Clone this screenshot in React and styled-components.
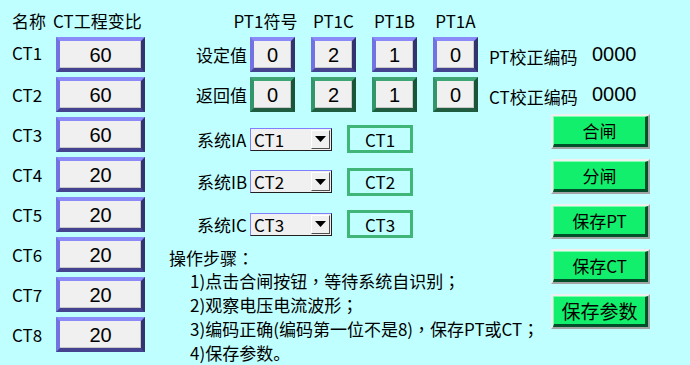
import React from "react";
import styled, { createGlobalStyle } from "styled-components";

const Global = createGlobalStyle`
  html, body { margin: 0; padding: 0; background: #c0ffff; }
  body {
    font-family: "Noto Sans CJK SC", "Microsoft YaHei", sans-serif;
    font-size: 17px;
    color: #000;
  }
  * { box-sizing: border-box; }
`;

const Page = styled.div`
  width: 690px;
  height: 365px;
  display: flex;
  overflow: hidden;
  background: #c0ffff;
`;

const LeftCol = styled.div`
  width: 145px;
  padding-left: 12px;
  display: flex;
  flex-direction: column;
  gap: 5px;
`;

const HeaderText = styled.div`
  height: 32px;
  padding-top: 8px;
  display: flex;
  align-items: center;
  line-height: 1;
  white-space: nowrap;
`;

const Gap = styled.span`
  display: inline-block;
  width: ${(p) => p.$w}px;
`;

const CtRow = styled.div`
  height: 35px;
  display: flex;
  align-items: center;
`;

const CtLabel = styled.div`
  width: 44px;
  line-height: 1;
  margin-top: ${(p) => p.$dy || 0}px;
`;

const ValueBox = styled.div`
  width: ${(p) => p.$w}px;
  height: 35px;
  border-style: solid;
  border-width: 4px;
  border-color: ${(p) =>
    p.$green
      ? "#3fa577 #1a5538 #1f5c40 #33956a"
      : "#8a8af8 #33336f #43438f #7272e2"};
  background: #f0f0f0;
  box-shadow: inset -1px -1px 0 #c8c8c8;
  display: flex;
  align-items: center;
  justify-content: center;
  font-family: "Liberation Sans", Arial, sans-serif;
  font-size: 20px;
  line-height: 1;
`;

const Middle = styled.div`
  margin-left: 24px;
  display: flex;
  flex-direction: column;
`;

const PtGrid = styled.div`
  padding-left: 27px;
  display: grid;
  grid-template-columns: 54px 61px 61px 61px 56px 103px auto;
  grid-template-rows: 32px 35px 35px;
  row-gap: 5px;
  align-items: center;
`;

const PtHead = styled.div`
  width: 45px;
  height: 32px;
  padding-top: 9px;
  padding-right: ${(p) => p.$pad || 0}px;
  display: flex;
  align-items: center;
  justify-content: center;
  white-space: nowrap;
  line-height: 1;
`;

const RowLabel = styled.div`
  line-height: 1;
  white-space: nowrap;
`;

const CodeLabel = styled.div`
  line-height: 1;
  white-space: nowrap;
  margin-top: 3px;
`;

const CodeValue = styled.div`
  font-family: "Liberation Sans", Arial, sans-serif;
  font-size: 20px;
  line-height: 1;
  margin-top: -1px;
`;

const Lower = styled.div`
  display: flex;
`;

const LowerLeft = styled.div`
  width: 382px;
  padding-top: 13px;
  display: flex;
  flex-direction: column;
`;

const DropList = styled.div`
  display: flex;
  flex-direction: column;
  gap: 14.5px;
`;

const DropRow = styled.div`
  height: 28px;
  padding-left: 28px;
  display: flex;
  align-items: center;
`;

const DropLabel = styled.div`
  width: 53px;
  line-height: 1;
  white-space: nowrap;
`;

const Select = styled.div`
  width: 82px;
  height: 23px;
  border-style: solid;
  border-width: 1px;
  border-color: #8080ff #202020 #202020 #8080ff;
  background: #f0f0f0;
  display: flex;
  align-items: center;
  padding: 0 1px 0 3px;
`;

const SelectText = styled.div`
  flex: 1;
  line-height: 1;
`;

const ArrowBtn = styled.div`
  width: 19px;
  height: 19px;
  border-style: solid;
  border-width: 1px;
  border-color: #ffffff #505050 #505050 #ffffff;
  background: #f0f0f0;
  display: flex;
  align-items: center;
  justify-content: center;
`;

const CtOut = styled.div`
  margin-left: 15px;
  width: 66px;
  height: 28px;
  border: 3px solid #3fb577;
  display: flex;
  align-items: center;
  justify-content: center;
  line-height: 1;
`;

const Steps = styled.div`
  margin-top: 9px;
  line-height: 24px;
  white-space: nowrap;
`;

const StepsTitle = styled.div`
  line-height: 22px;
`;

const StepLine = styled.div`
  padding-left: 21px;
`;

const Punct = styled.span`
  font-family: "Noto Sans CJK TC", "Noto Sans CJK SC", sans-serif;
`;

const Buttons = styled.div`
  padding-top: 2px;
  display: flex;
  flex-direction: column;
  gap: 10px;
`;

const Btn = styled.div`
  width: 99px;
  height: 35px;
  border-style: solid;
  border-width: 2px;
  border-color: #f0f0f0 #a4a4a4 #a4a4a4 #f0f0f0;
  display: flex;
`;

const BtnFace = styled.div`
  flex: 1;
  background: #12ef6c;
  border-style: solid;
  border-width: 1px 3px 3px 1px;
  border-color: #7dffb0 #00502a #00502a #7dffb0;
  display: flex;
  align-items: center;
  justify-content: center;
  font-size: ${(p) => p.$fs || 17}px;
  line-height: 1;
  white-space: nowrap;
`;

const Arrow = () => (
  <svg width="11" height="6" viewBox="0 0 11 6">
    <polygon points="0,0 11,0 5.5,6" fill="#000" />
  </svg>
);

// centred full-width punctuation, as in the reference
const Text = ({ children }) =>
  children.split(/([，；：])/).map((part, i) =>
    /^[，；：]$/.test(part) ? <Punct key={i}>{part}</Punct> : part
  );

const ctValues = ["60", "60", "60", "20", "20", "20", "20", "20"];
const ptHeads = ["PT1符号", "PT1C", "PT1B", "PT1A"];
const setVals = ["0", "2", "1", "0"];
const backVals = ["0", "2", "1", "0"];
const drops = [
  ["系统IA", "CT1"],
  ["系统IB", "CT2"],
  ["系统IC", "CT3"],
];
const buttons = [
  ["合闸", 17],
  ["分闸", 17],
  ["保存PT", 17],
  ["保存CT", 17],
  ["保存参数", 19],
];
const steps = [
  "1)点击合闸按钮，等待系统自识别；",
  "2)观察电压电流波形；",
  "3)编码正确(编码第一位不是8)，保存PT或CT；",
  "4)保存参数。",
];

export default function App() {
  return (
    <Page>
      <Global />
      <LeftCol>
        <HeaderText>
          名称<Gap $w={7} />CT工程变比
        </HeaderText>
        {ctValues.map((v, i) => (
          <CtRow key={i}>
            <CtLabel $dy={i === 0 ? -4 : 0}>CT{i + 1}</CtLabel>
            <ValueBox $w={89}>{v}</ValueBox>
          </CtRow>
        ))}
      </LeftCol>
      <Middle>
        <PtGrid>
          <div />
          {ptHeads.map((h, i) => (
            <PtHead key={h} $pad={i === 0 ? 14 : 0}>
              {h}
            </PtHead>
          ))}
          <div />
          <div />
          <RowLabel>设定值</RowLabel>
          {setVals.map((v, i) => (
            <ValueBox key={i} $w={45}>
              {v}
            </ValueBox>
          ))}
          <CodeLabel>PT校正编码</CodeLabel>
          <CodeValue>0000</CodeValue>
          <RowLabel>返回值</RowLabel>
          {backVals.map((v, i) => (
            <ValueBox key={i} $w={45} $green>
              {v}
            </ValueBox>
          ))}
          <CodeLabel>CT校正编码</CodeLabel>
          <CodeValue>0000</CodeValue>
        </PtGrid>
        <Lower>
          <LowerLeft>
            <DropList>
              {drops.map(([l, v]) => (
                <DropRow key={l}>
                  <DropLabel>{l}</DropLabel>
                  <Select>
                    <SelectText>{v}</SelectText>
                    <ArrowBtn>
                      <Arrow />
                    </ArrowBtn>
                  </Select>
                  <CtOut>{v}</CtOut>
                </DropRow>
              ))}
            </DropList>
            <Steps>
              <StepsTitle>
                <Text>操作步骤：</Text>
              </StepsTitle>
              {steps.map((s) => (
                <StepLine key={s}>
                  <Text>{s}</Text>
                </StepLine>
              ))}
            </Steps>
          </LowerLeft>
          <Buttons>
            {buttons.map(([t, fs]) => (
              <Btn key={t}>
                <BtnFace $fs={fs}>{t}</BtnFace>
              </Btn>
            ))}
          </Buttons>
        </Lower>
      </Middle>
    </Page>
  );
}
